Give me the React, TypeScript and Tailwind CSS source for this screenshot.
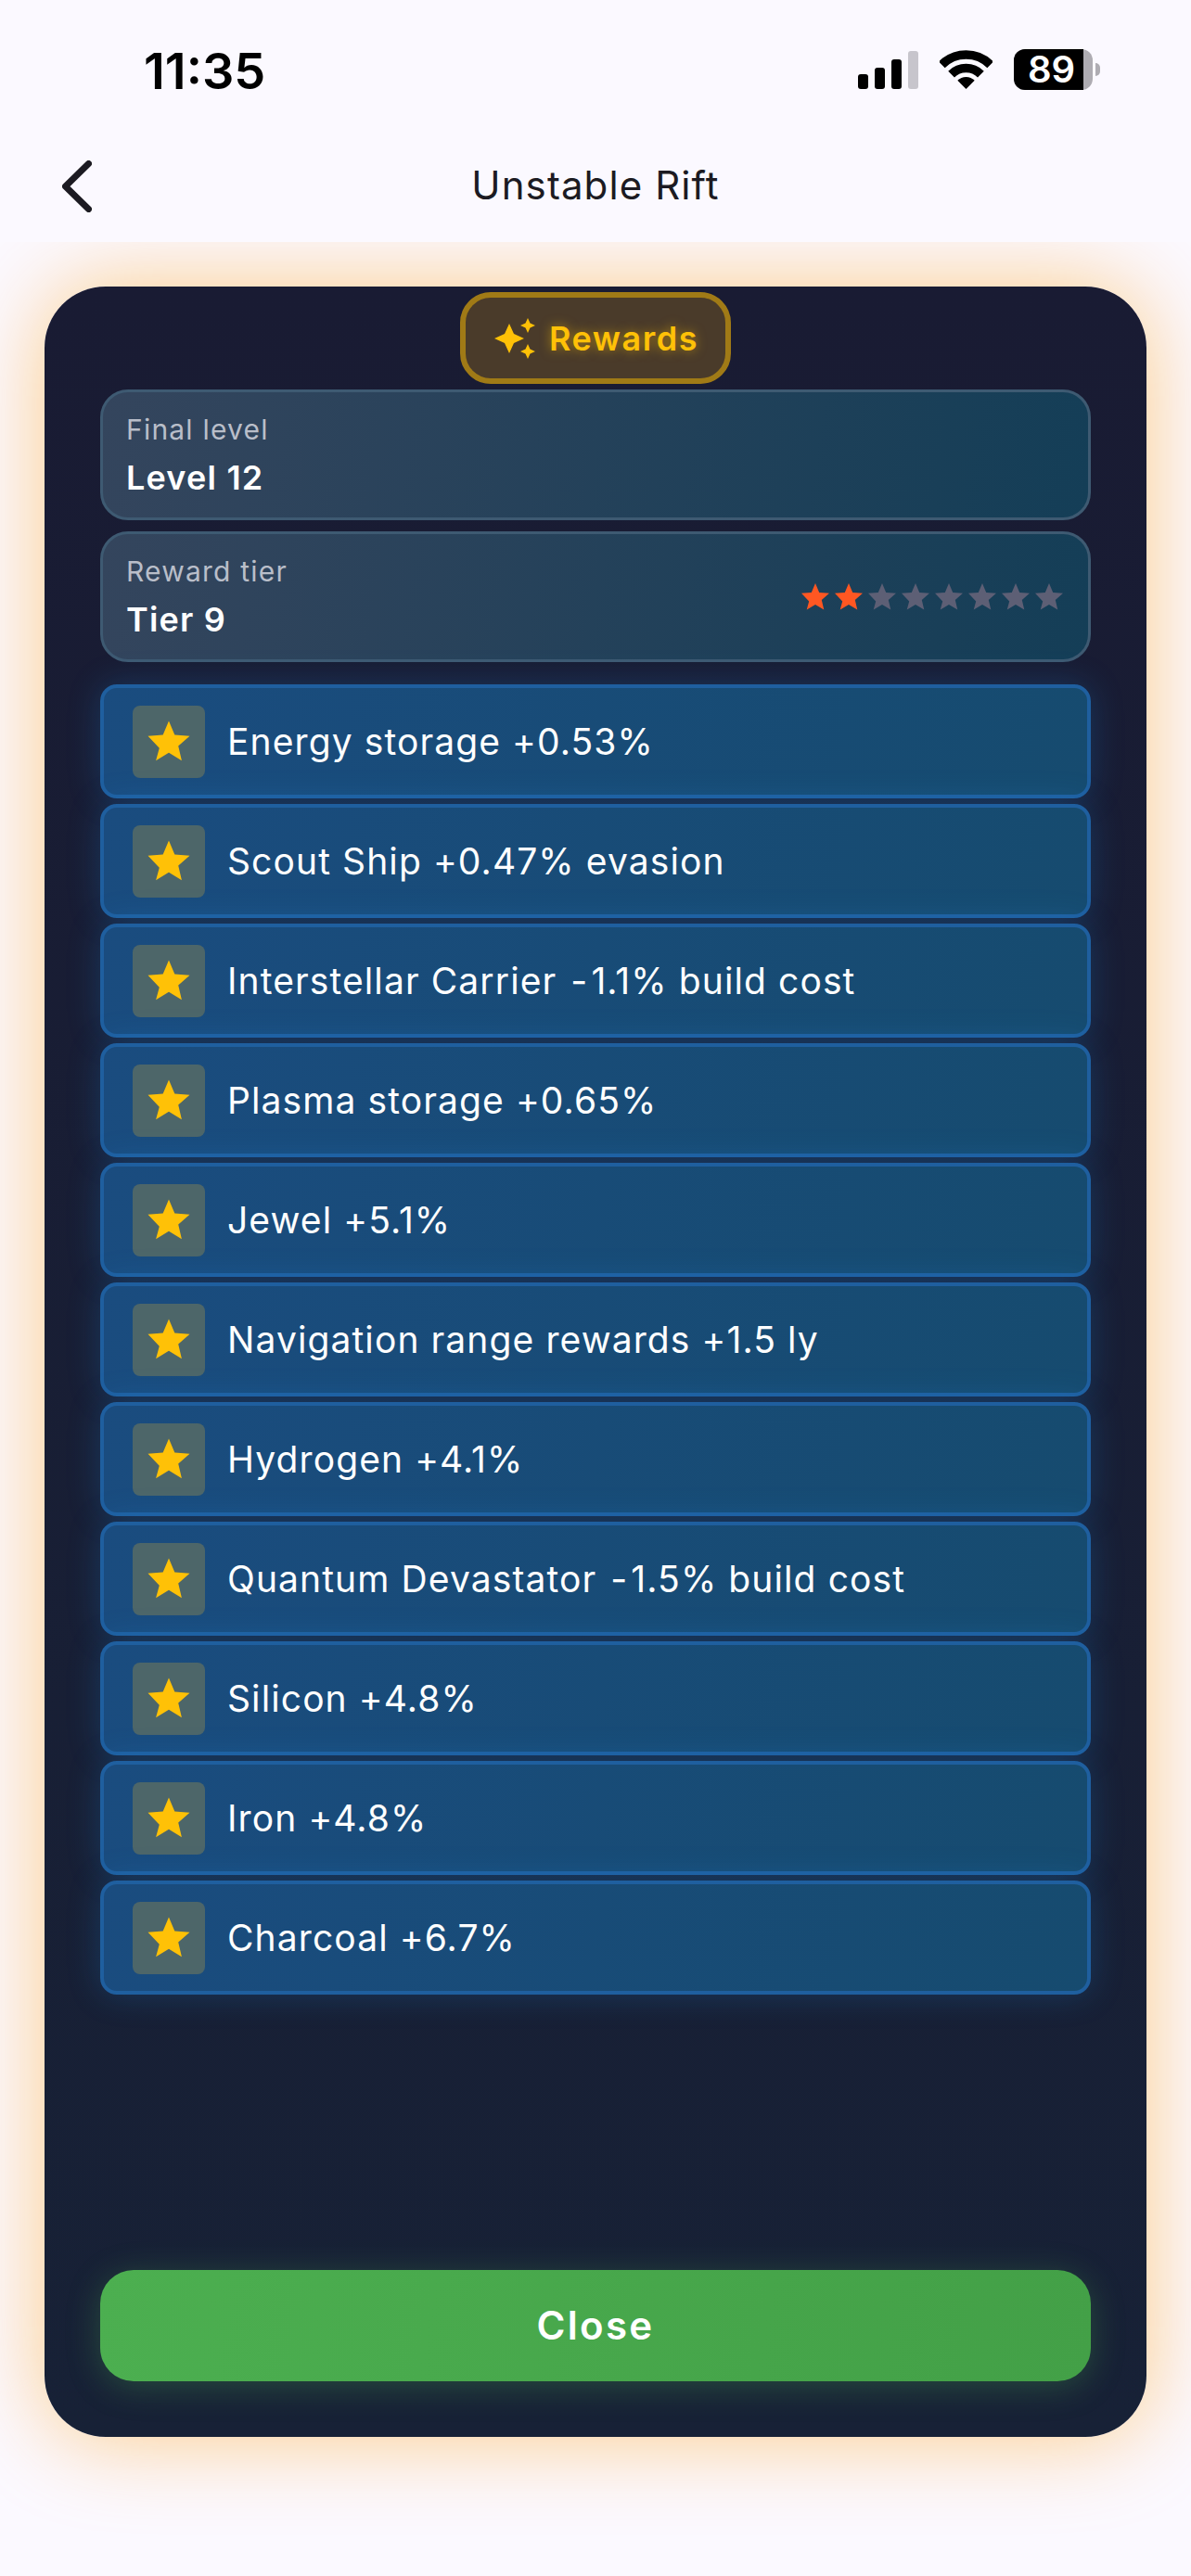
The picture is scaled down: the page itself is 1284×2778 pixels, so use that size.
import React from 'react';

const rewards = [
  'Energy storage +0.53%',
  'Scout Ship +0.47% evasion',
  'Interstellar Carrier -1.1% build cost',
  'Plasma storage +0.65%',
  'Jewel +5.1%',
  'Navigation range rewards +1.5 ly',
  'Hydrogen +4.1%',
  'Quantum Devastator -1.5% build cost',
  'Silicon +4.8%',
  'Iron +4.8%',
  'Charcoal +6.7%',
];

const STAR = 'M12 17.27L18.18 21l-1.64-7.03L22 9.24l-7.19-.61L12 2 9.19 8.63 2 9.24l5.46 5.73L5.82 21z';
const SPARKLES =
  'M19 9l1.25-2.75L23 5l-2.75-1.25L19 1l-1.25 2.75L15 5l2.75 1.25L19 9zm-7.5.5L9 4 6.5 9.5 1 12l5.5 2.5L9 20l2.5-5.5L17 12l-5.5-2.5zM19 15l-1.25 2.75L15 19l2.75 1.25L19 23l1.25-2.75L23 19l-2.75-1.25L19 15z';

function StarIcon({ className }: { className: string }) {
  return (
    <svg viewBox="0 0 24 24" className={className} fill="currentColor">
      <path d={STAR} />
    </svg>
  );
}

function StatusBar() {
  return (
    <div className="flex h-[150px] items-start justify-between pt-[50px] pl-[155px] pr-[98px]">
      <span className="text-[54px] leading-[54px] font-semibold text-black">11:35</span>
      <div className="flex items-start pt-[3px]">
        <div className="mt-[2px] flex h-[41px] items-end gap-[7px]">
          <div className="h-[16px] w-[11px] rounded-[3px] bg-black" />
          <div className="h-[23px] w-[11px] rounded-[3px] bg-black" />
          <div className="h-[32px] w-[11px] rounded-[3px] bg-black" />
          <div className="h-[41px] w-[11px] rounded-[3px] bg-[#c7c5cc]" />
        </div>
        <svg viewBox="0 0 57 42" className="ml-[23px] mt-[1px] h-[42px] w-[57px]" fill="none" stroke="#000" strokeWidth="9.5">
          <path d="M2.3 15.8A37 37 0 0 1 54.7 15.8" />
          <path d="M12.6 26.1A22.5 22.5 0 0 1 44.4 26.1" />
          <path d="M28.5 42L19.3 32.8A13 13 0 0 1 37.7 32.8Z" fill="#000" stroke="none" />
        </svg>
        <div className="ml-[23px] flex items-center">
          <div className="flex h-[44px] w-[85px] rounded-[12px] bg-[#aeacb2]">
            <div className="flex h-full w-[75px] items-center justify-center rounded-l-[12px] bg-black pl-[6px] text-[40px] leading-[44px] font-semibold text-white">
              89
            </div>
          </div>
          <div className="ml-[3px] h-[14px] w-[5px] rounded-r-full bg-[#aeacb2]" />
        </div>
      </div>
    </div>
  );
}

function StatCard({ label, value, children }: { label: string; value: string; children?: React.ReactNode }) {
  return (
    <div className="flex h-[141px] items-center justify-between rounded-[30px] border-[3px] border-[#3e5a72] bg-[linear-gradient(100deg,#34455d,#143e57)] pl-[25px] pr-[24px]">
      <div>
        <div className="-mt-[1px] text-[30px] leading-[40px] tracking-[1.2px] text-[#b9bec9]">{label}</div>
        <div className="mt-[10px] text-[36px] leading-[44px] font-semibold tracking-[1.2px] text-white">{value}</div>
      </div>
      {children}
    </div>
  );
}

// the hyphen sits a little wider in the original than in this Inter
function RewardText({ text }: { text: string }) {
  const [before, after] = text.split('-');
  if (after === undefined) return <>{text}</>;
  return (
    <>
      {before}
      <span className="mx-[3px]">-</span>
      {after}
    </>
  );
}

export default function App() {
  return (
    <div className="flex min-h-[2778px] flex-col overflow-hidden bg-[#fbf9ff] font-['Inter',sans-serif]">
      <div className="relative z-10 h-[261px] bg-[#fbf9ff]">
        <StatusBar />
        <div className="relative flex h-[100px] items-center justify-center">
          <svg viewBox="0 0 32 56" className="absolute left-[67px] top-[23px] h-[56px] w-[32px]" fill="none" stroke="#1c1b22" strokeWidth="7" strokeLinecap="round" strokeLinejoin="round">
            <path d="M28.5 3.5L3.5 28L28.5 52.5" />
          </svg>
          <span className="text-[42px] leading-[50px] tracking-[1.1px] text-[#1c1b22]">Unstable Rift</span>
        </div>
      </div>

      <div className="mx-[48px] mt-[48px] flex h-[2319px] flex-col rounded-[66px] bg-gradient-to-b from-[#191b33] to-[#172136] px-[60px] pt-[6px] pb-[60px] shadow-[0_0_96px_rgba(255,152,0,0.48)]">
        <div className="mx-auto flex h-[99px] w-[292px] items-center justify-center gap-[13px] rounded-[33px] border-[6px] border-[#a07a16] bg-[#4a3b2a] text-[#ffc107]">
          <svg viewBox="0 0 24 24" className="h-[48px] w-[48px]" fill="currentColor">
            <path d={SPARKLES} />
          </svg>
          <span className="text-[36px] leading-[44px] font-semibold tracking-[1.5px] [text-shadow:0_0_12px_rgba(255,193,7,0.55)]">Rewards</span>
        </div>

        <div className="mt-[6px] flex flex-col gap-[12px]">
          <StatCard label="Final level" value="Level 12" />
          <StatCard label="Reward tier" value="Tier 9">
            <div className="flex">
              {Array.from({ length: 8 }).map((_, i) => (
                <StarIcon key={i} className={i < 2 ? 'h-[36px] w-[36px] text-[#ff5722]' : 'h-[36px] w-[36px] text-[#5d5f75]'} />
              ))}
            </div>
          </StatCard>
        </div>

        <div className="mt-[24px] flex flex-col gap-[6px]">
          {rewards.map((r) => (
            <div
              key={r}
              className="flex h-[123px] items-center gap-[24px] rounded-[18px] border-[4px] border-[#1f5f9f] bg-[linear-gradient(100deg,#1a4c7f,#164b6f)] pl-[31px] shadow-[0_0_36px_rgba(33,150,243,0.22)]"
            >
              <div className="flex h-[78px] w-[78px] items-center justify-center rounded-[8px] bg-[#4d6669]">
                <StarIcon className="h-[54px] w-[54px] text-[#ffc107]" />
              </div>
              <span className="text-[39px] leading-[48px] tracking-[1.1px] text-white">
                <RewardText text={r} />
              </span>
            </div>
          ))}
        </div>

        <button className="mt-auto flex h-[120px] items-center justify-center rounded-[36px] bg-[linear-gradient(100deg,#4caf50,#43a047)] text-[42px] leading-[50px] font-semibold tracking-[2.3px] text-white shadow-[0_6px_36px_rgba(76,175,80,0.3)]">
          Close
        </button>
      </div>
    </div>
  );
}
